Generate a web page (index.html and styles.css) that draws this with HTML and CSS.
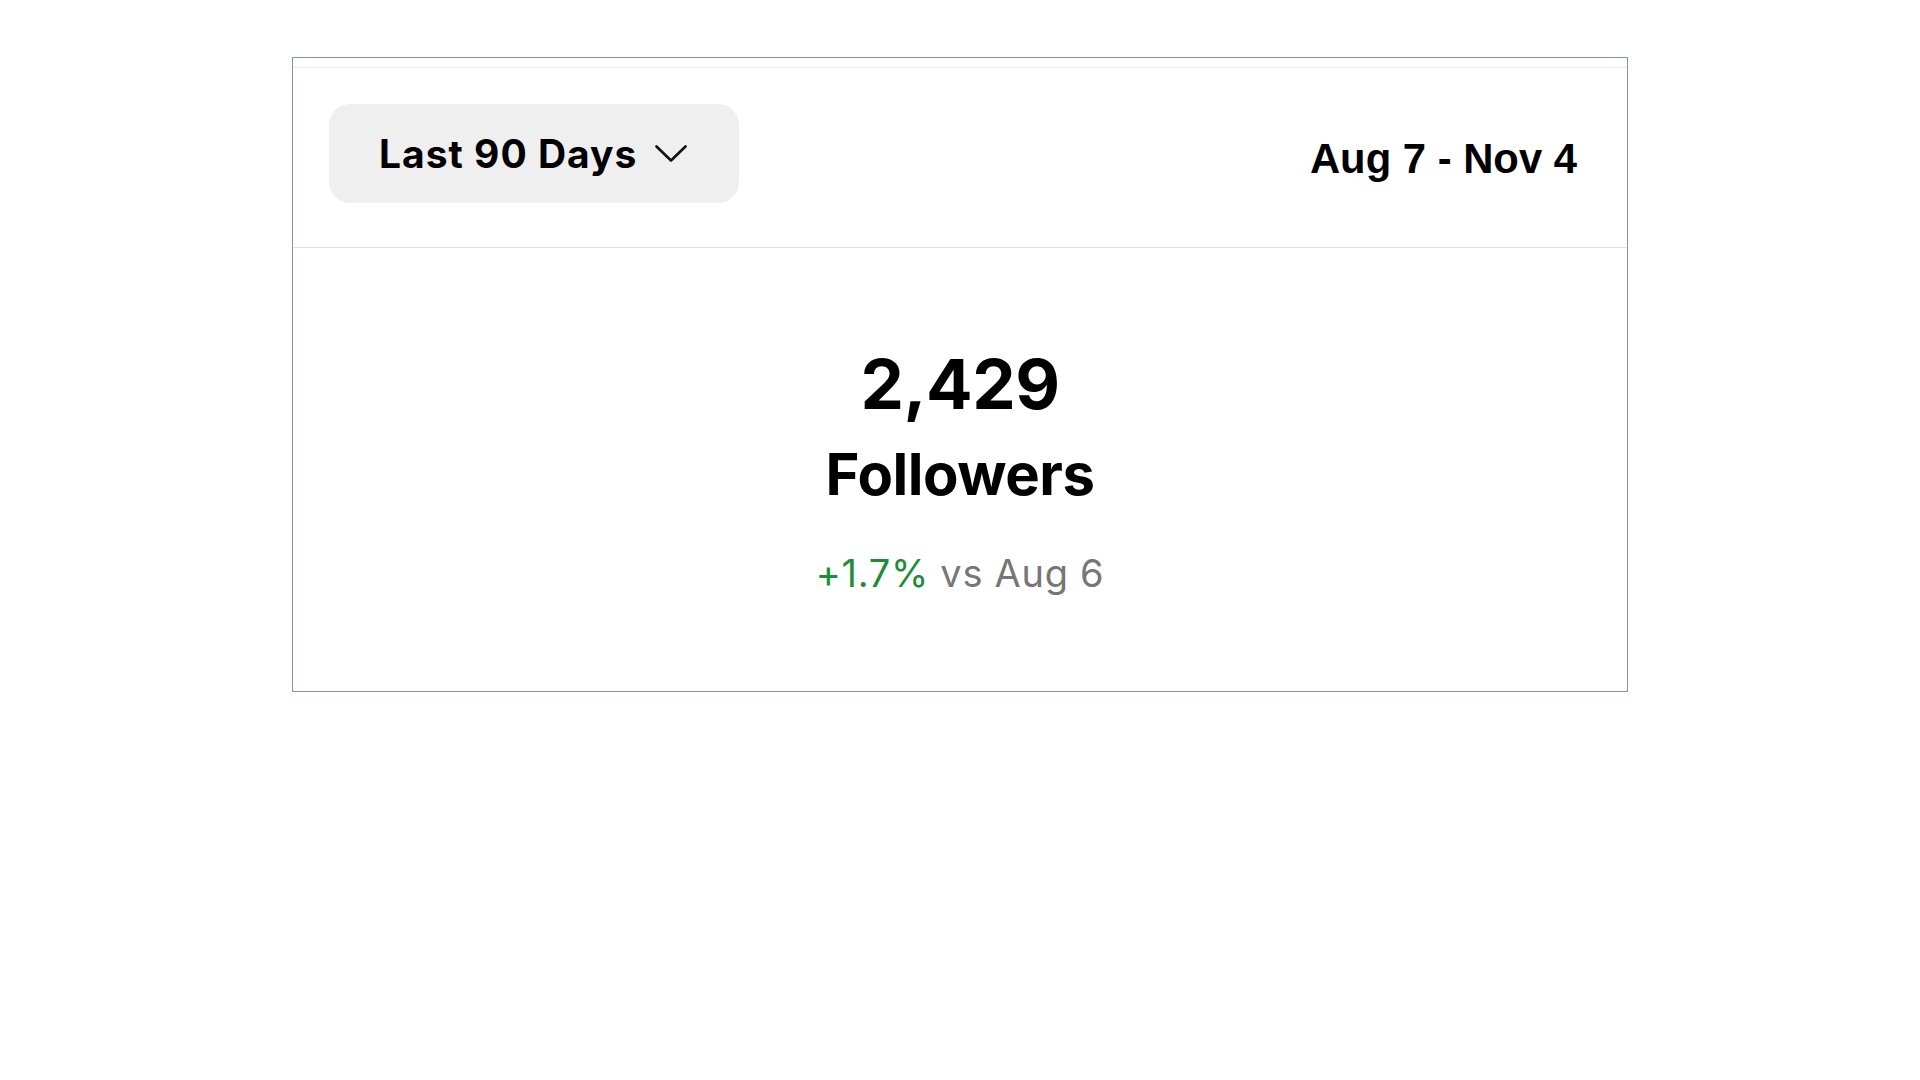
FILE: index.html
```html
<!DOCTYPE html>
<html lang="en">
<head>
<meta charset="utf-8">
<title>Followers</title>
<link rel="stylesheet" href="styles.css">
</head>
<body>
  <div class="card">
    <div class="card-inner">
      <div class="header">
        <button class="range-btn" type="button">
          <span class="range-label">Last 90 Days</span>
          <svg class="chev" width="32" height="17" viewBox="0 0 32 17" aria-hidden="true">
            <polyline points="1.5,1.5 16,15.5 30.5,1.5" fill="none" stroke="#111" stroke-width="2.6" stroke-linecap="round" stroke-linejoin="round"/>
          </svg>
        </button>
        <div class="date-range">Aug 7 - Nov 4</div>
      </div>
      <div class="stats">
        <div class="count">2,429</div>
        <div class="label">Followers</div>
        <div class="delta"><span class="up">+1.7%</span> vs Aug 6</div>
      </div>
    </div>
  </div>
</body>
</html>
```
FILE: styles.css
```css
html, body {
  margin: 0;
  padding: 0;
  background: #ffffff;
}

body {
  font-family: Inter, "Noto Sans", sans-serif;
  color: #000;
}

.card {
  box-sizing: border-box;
  width: 1336px;
  margin: 57px 0 0 292px;
  border: 1px solid #7d98a3;
  background: #fff;
  padding-top: 9px;
}

.card-inner {
  border-top: 1px solid #e8e8e8;
}

.header {
  display: flex;
  align-items: center;
  justify-content: space-between;
  padding: 36px 50px 44px 36px;
  border-bottom: 1px solid #e2e2e2;
}

.range-btn {
  box-sizing: border-box;
  height: 99px;
  width: 410px;
  display: flex;
  align-items: center;
  gap: 18px;
  padding: 0 0 0 50px;
  border: none;
  border-radius: 21px;
  background: #efefef;
  cursor: pointer;
  font-family: Inter, "Noto Sans", sans-serif;
}

.range-label {
  font-size: 39px;
  font-weight: 700;
  color: #000;
  line-height: 1;
  letter-spacing: 1px;
}

.chev {
  display: block;
}

.date-range {
  font-family: "Liberation Sans", Arial, sans-serif;
  font-weight: 700;
  font-size: 41.8px;
  line-height: 1;
  margin-top: 11px;
  color: #000;
}

.stats {
  display: flex;
  flex-direction: column;
  align-items: center;
  padding: 102px 0 99px;
}

.count {
  font-size: 69px;
  font-weight: 700;
  line-height: 69px;
  letter-spacing: -0.5px;
}

.label {
  font-size: 58px;
  font-weight: 700;
  line-height: 58px;
  margin-top: 26px;
  letter-spacing: -0.5px;
}

.delta {
  font-size: 38px;
  font-weight: 400;
  line-height: 37px;
  margin-top: 52px;
  color: #767676;
  letter-spacing: 0.7px;
}

.delta .up {
  color: #1d8d3a;
}
```
